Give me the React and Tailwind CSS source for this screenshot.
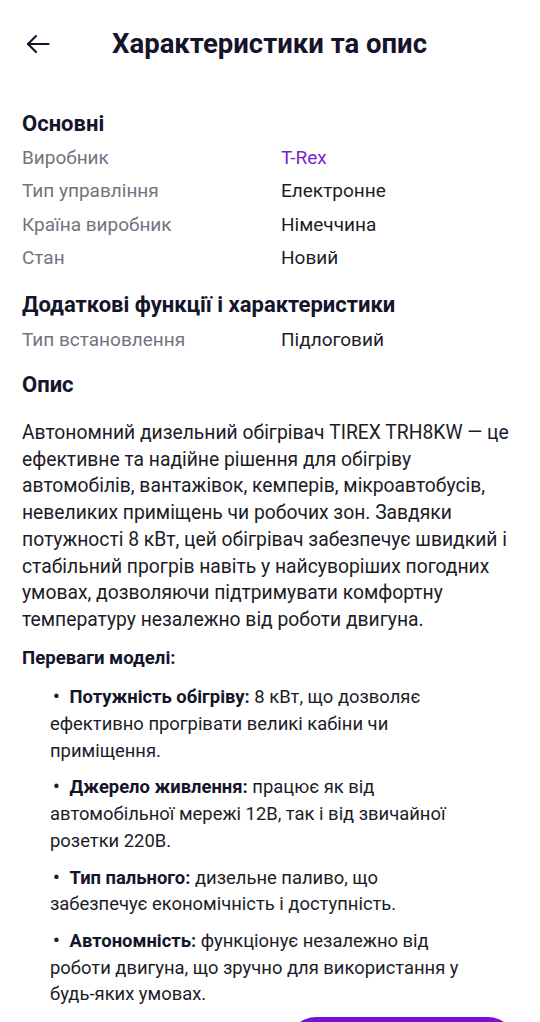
const basics = [
  { label: 'Виробник', value: 'T-Rex', accent: true },
  { label: 'Тип управління', value: 'Електронне' },
  { label: 'Країна виробник', value: 'Німеччина' },
  { label: 'Стан', value: 'Новий' },
]

const extras = [{ label: 'Тип встановлення', value: 'Підлоговий' }]

const benefits = [
  { title: 'Потужність обігріву:', text: '8 кВт, що дозволяє ефективно прогрівати великі кабіни чи приміщення.' },
  { title: 'Джерело живлення:', text: 'працює як від автомобільної мережі 12В, так і від звичайної розетки 220В.' },
  { title: 'Тип пального:', text: 'дизельне паливо, що забезпечує економічність і доступність.' },
  { title: 'Автономність:', text: 'функціонує незалежно від роботи двигуна, що зручно для використання у будь-яких умовах.' },
]

// Стрілка назад
function BackArrow() {
  return (
    <svg width="24" height="24" viewBox="0 0 24 24" fill="none" stroke="currentColor" strokeWidth="2.1" strokeLinecap="round" strokeLinejoin="round">
      <path d="M22.5 12H2" />
      <path d="M10 4 2 12l8 8" />
    </svg>
  )
}

function Rows({ items }) {
  return (
    <div>
      {items.map((row) => (
        <div key={row.label} className="flex text-[19px] leading-[33.4px]">
          <span className="w-[259px] shrink-0 text-[#737380]">{row.label}</span>
          <span className={row.accent ? 'text-[#7a1fd0]' : 'text-[#1c1c28]'}>{row.value}</span>
        </div>
      ))}
    </div>
  )
}

export default function App() {
  return (
    <div
      className="relative h-[1022px] overflow-hidden bg-white text-[#1c1c28]"
      style={{ fontFamily: 'Roboto, "Noto Sans", sans-serif' }}
    >
      <header className="flex h-[88px] items-center">
        <button type="button" aria-label="Назад" className="ml-[26px] flex h-[24px] w-[24px] items-center justify-center text-[#14142b]">
          <BackArrow />
        </button>
        <h1 className="ml-[62px] text-[27.5px] font-bold leading-[32px] text-[#14142b]">Характеристики та опис</h1>
      </header>

      <main className="px-[22px]">
        <h2 className="mt-[22px] text-[22px] font-bold leading-[28px] text-[#14142b]">Основні</h2>
        <div className="mt-[3px]">
          <Rows items={basics} />
        </div>

        <h2 className="mt-[16px] text-[22px] font-bold leading-[28px] text-[#14142b]">Додаткові функції і характеристики</h2>
        <div className="mt-[4px]">
          <Rows items={extras} />
        </div>

        <h2 className="mt-[15px] text-[22px] font-bold leading-[28px] text-[#14142b]">Опис</h2>

        <p className="mt-[21px] text-[19.3px] leading-[26.7px]">
          Автономний дизельний обігрівач TIREX TRH8KW — це ефективне та надійне рішення для обігріву автомобілів, вантажівок, кемперів, мікроавтобусів, невеликих приміщень чи робочих зон. Завдяки потужності 8 кВт, цей обігрівач забезпечує швидкий і стабільний прогрів навіть у найсуворіших погодних умовах, дозволяючи підтримувати комфортну температуру незалежно від роботи двигуна.
        </p>

        <p className="mt-[11px] text-[18.6px] font-bold leading-[26.7px] text-[#14142b]">Переваги моделі:</p>

        <ul className="mr-[50px] mt-[13px] flex flex-col gap-[10px] pl-[28px] text-[18.4px] leading-[26.7px]">
          {benefits.map((b) => (
            <li key={b.title}>
              <span className="ml-[3px] mr-[10px] font-bold">•</span>
              <span className="font-bold text-[#14142b]">{b.title}</span> {b.text}
            </li>
          ))}
        </ul>
      </main>

      <button
        type="button"
        className="absolute left-[288px] top-[1017px] h-[56px] w-[228px] rounded-[28px] bg-[#7a0fd6]"
        aria-label="Дія"
      />
    </div>
  )
}
